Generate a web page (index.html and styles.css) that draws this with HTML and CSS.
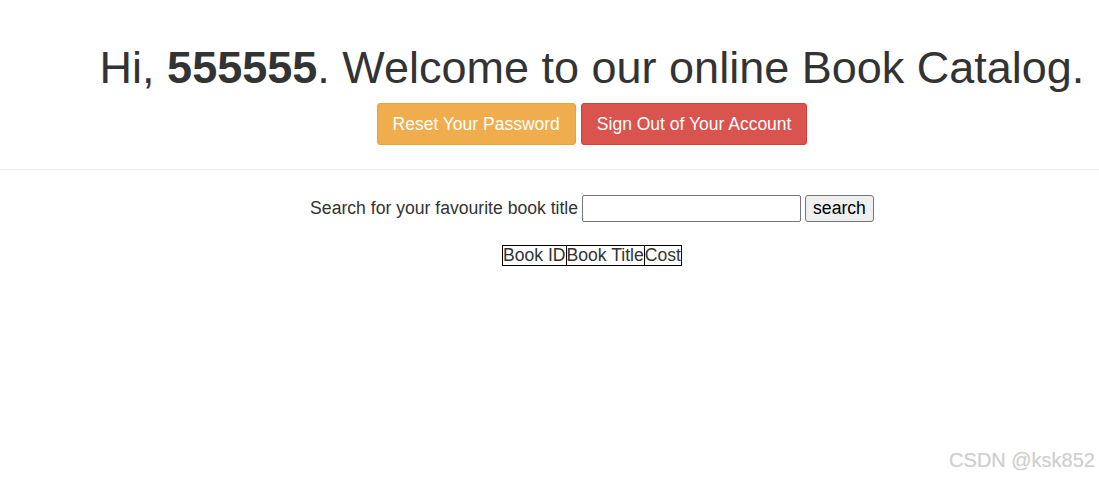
FILE: index.html
```html
<!DOCTYPE html>
<html>
<head>
<meta charset="utf-8">
<link rel="stylesheet" href="styles.css">
</head>
<body>
<div class="page">
  <header class="hero">
    <h1 class="title">Hi, <b>555555</b>. Welcome to our online Book Catalog.</h1>
    <div class="actions">
      <a class="btn btn-warning" href="#">Reset Your Password</a>
      <a class="btn btn-danger" href="#">Sign Out of Your Account</a>
    </div>
  </header>
  <hr class="rule">
  <main class="content">
    <form class="search">
      <label>Search for your favourite book title</label>
      <input type="text" class="search-input">
      <button type="button" class="search-btn">search</button>
    </form>
    <table class="books">
      <tr><th>Book ID</th><th>Book Title</th><th>Cost</th></tr>
    </table>
  </main>
</div>
<div class="watermark">CSDN @ksk852</div>
</body>
</html>
```
FILE: styles.css
```css
html, body { margin: 0; padding: 0; background: #fff; }
body {
  font-family: "Liberation Sans", Arial, sans-serif;
  color: #333;
  font-size: 17.6px;
  overflow: hidden;
}
.page { width: 100%; }
.hero, .content { padding-left: 85px; box-sizing: border-box; }
.hero { text-align: center; padding-top: 43px; }
.title {
  font-size: 45px;
  font-weight: normal;
  margin: 0;
  line-height: 1.1;
  white-space: nowrap;
}
.title b { font-weight: bold; }
.actions { margin-top: 10px; display: flex; justify-content: center; gap: 5px; }
.btn {
  display: inline-block;
  padding: 10px 15px;
  font-size: 17.5px;
  line-height: 20px;
  border-radius: 3px;
  border: 1px solid transparent;
  color: #fff;
  text-decoration: none;
}
.btn-warning { background: #f0ad4e; border-color: #eea236; }
.btn-danger { background: #d9534f; border-color: #d43f3a; }
.rule { border: 0; border-top: 1px solid #eee; margin: 24px 0 0; width: 100%; }
.content { display: flex; flex-direction: column; align-items: center; padding-top: 25px; }
.search { display: flex; align-items: center; gap: 4px; }
.search-input { width: 213px; height: 21px; border: 1px solid #767676; border-radius: 2px; padding: 2px; }
.search-btn {
  font-family: "Liberation Sans", Arial, sans-serif;
  font-size: 17.6px; color: #000;
  background: #efefef; border: 1px solid #767676; border-radius: 3px;
  padding: 1px 7px; height: 27px; line-height: 20px;
}
.books { border: 1px solid #000; border-collapse: separate; border-spacing: 0; margin-top: 23px; }
.books th { font-weight: normal; border: 1px solid #000; padding: 0; border-width: 0 0 0 1px; line-height: 19px; }
.books th:first-child { border-left: 0; }
.watermark {
  position: absolute; right: 4px; bottom: 7px;
  color: #cfcfcf; font-size: 20px;
  text-shadow: 0 0 1px #e6e6e6;
}
```
